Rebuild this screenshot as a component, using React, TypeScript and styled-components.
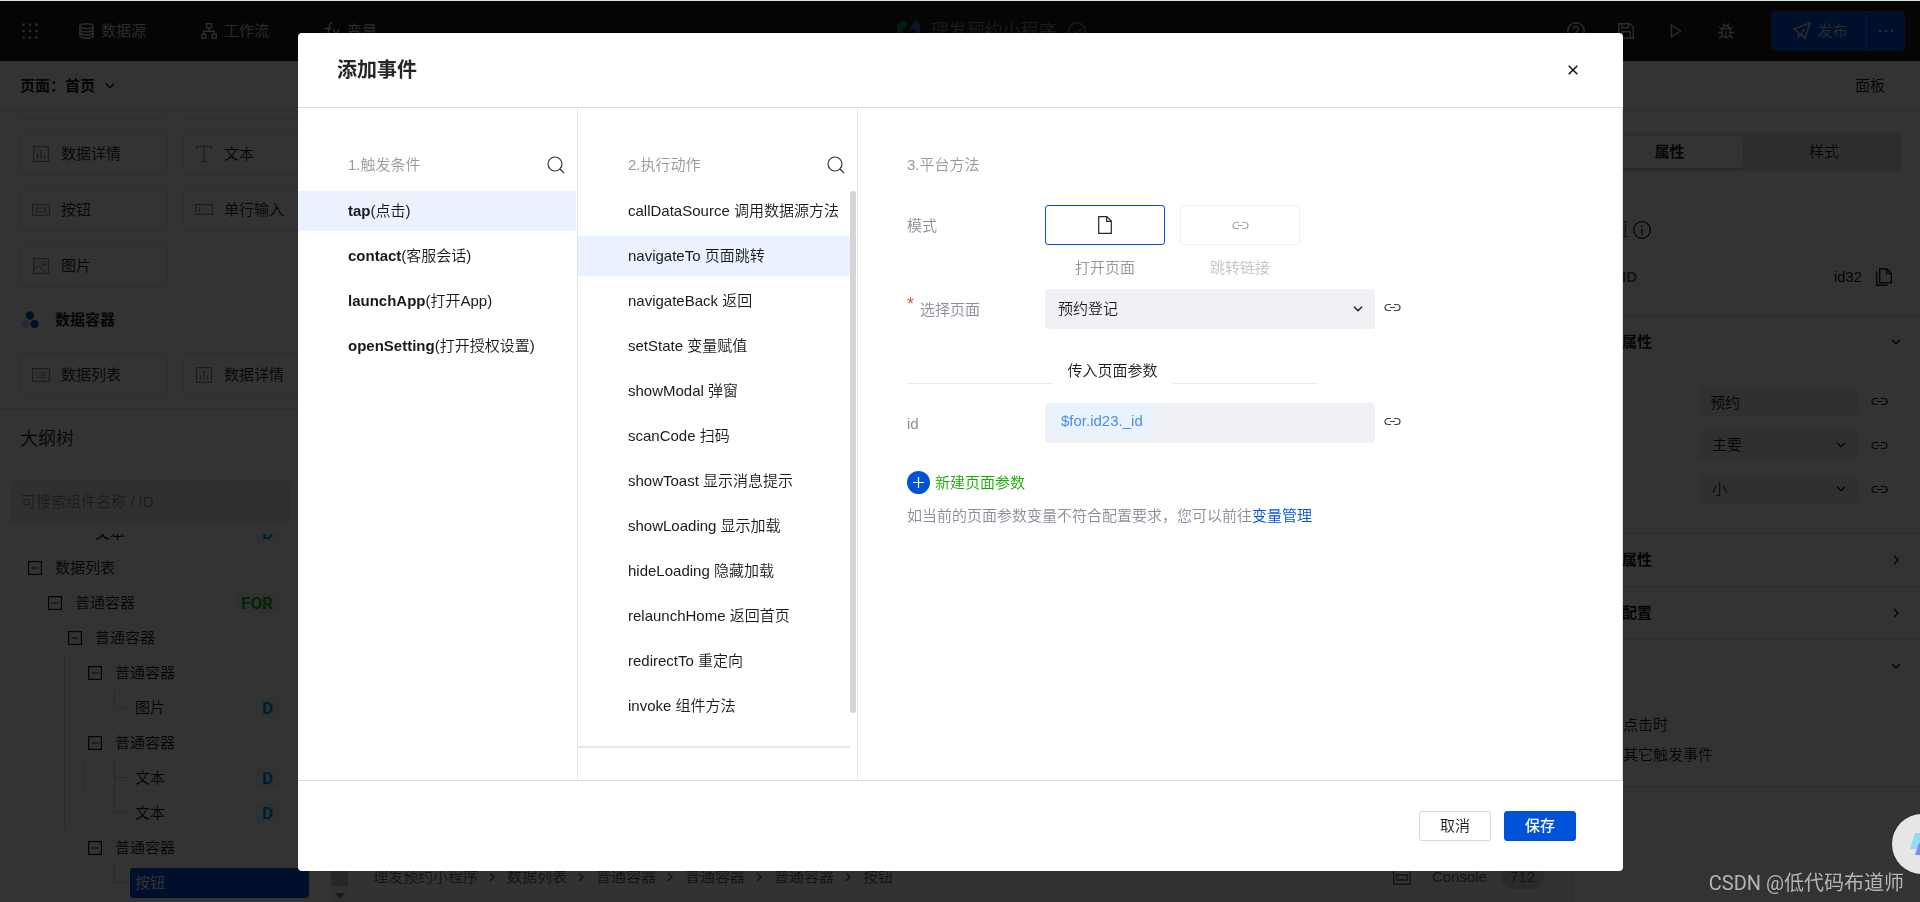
import React from 'react';
import styled, { createGlobalStyle, css } from 'styled-components';

const GlobalStyle = createGlobalStyle`
  *, *::before, *::after { box-sizing: border-box; }
  html, body { margin: 0; height: 100%; overflow: hidden; }
  body {
    font-family: "Liberation Sans", "Noto Sans CJK SC", sans-serif;
    font-size: 15px;
    font-weight: 350;
    line-height: 20px;
    color: #1a1a1a;
    background: #fff;
  }
  button, input, select { font: inherit; color: inherit; }
  button { border: 0; background: none; padding: 0; cursor: pointer; }
  ul { list-style: none; margin: 0; padding: 0; }
  h1, h2, h3, p { margin: 0; font-size: inherit; font-weight: inherit; }
  b { font-weight: 700; }
  svg { display: block; flex: none; }
`;

/* ---------- icons ---------- */

const Icon = styled.svg.attrs((p) => ({ fill: 'none', stroke: p.stroke ?? 'currentColor', 'aria-hidden': true }))`
  overflow: visible;
`;

const LinkIcon = () => (
  <Icon width="17" height="9" viewBox="0 0 17 9" strokeWidth="1.2">
    <path d="M7 1.5H4a3 3 0 0 0 0 6h3M10 1.5h3a3 3 0 0 1 0 6h-3M6 4.5h5" />
  </Icon>
);
const ChevronDown = () => (
  <Icon width="10" height="6" viewBox="0 0 10 6" strokeWidth="1.5">
    <path d="M1 .8l4 4 4-4" />
  </Icon>
);
const ChevronRight = () => (
  <Icon width="6" height="10" viewBox="0 0 6 10" strokeWidth="1.5">
    <path d="M1 1l4 4-4 4" />
  </Icon>
);
const SearchIcon = () => (
  <Icon width="18" height="18" viewBox="0 0 18 18" strokeWidth="1.2">
    <circle cx="8" cy="8" r="7" />
    <path d="M13 13l4 4" />
  </Icon>
);
const FileIcon = () => (
  <Icon width="14" height="18" viewBox="0 0 14 18" strokeWidth="1.2">
    <path d="M.7.7h8.2l4.4 4.4v12.2H.7zM8.7.7v4.6h4.6" />
  </Icon>
);
const CloseIcon = () => (
  <Icon width="10" height="10" viewBox="0 0 10 10" strokeWidth="1.6">
    <path d="M.7.7l8.6 8.6M9.3.7L.7 9.3" />
  </Icon>
);
const AppsIcon = () => (
  <Icon width="16" height="16" viewBox="0 0 16 16" stroke="none">
    {[1.5, 8, 14.5].map((y) => [1.5, 8, 14.5].map((x) => <circle key={`${x}-${y}`} cx={x} cy={y} r="1.3" fill="currentColor" />))}
  </Icon>
);
const DatabaseIcon = () => (
  <Icon width="15" height="16" viewBox="0 0 15 16" strokeWidth="1.5">
    <ellipse cx="7.5" cy="3.2" rx="6.6" ry="2.4" />
    <path d="M.9 3.2v9.6c0 1.3 3 2.4 6.6 2.4s6.6-1.1 6.6-2.4V3.2M.9 6.4c0 1.3 3 2.4 6.6 2.4s6.6-1.1 6.6-2.4M.9 9.6c0 1.3 3 2.4 6.6 2.4s6.6-1.1 6.6-2.4" />
  </Icon>
);
const FlowIcon = () => (
  <Icon width="16" height="16" viewBox="0 0 16 16" strokeWidth="1.4">
    <path d="M5.5.7h5v4h-5zM.7 11.3h4v4h-4zM11.3 11.3h4v4h-4zM8 4.7v3.5M2.7 11.3V8.2h10.6v3.1" />
  </Icon>
);
const FunctionIcon = () => (
  <Icon width="16" height="18" viewBox="0 0 16 18" strokeWidth="1.4">
    <path d="M8.5 1.2C6.4.6 5.6 1.6 5.3 3.5L3.6 14c-.3 2-1.3 3-3 2.5M1 6.5h6.5M9 8c2 0 2.5 7 5.5 7M15.5 8c-2 0-4 7-6.5 7" />
  </Icon>
);
const HelpIcon = () => (
  <Icon width="18" height="18" viewBox="0 0 18 18" strokeWidth="1.4">
    <circle cx="9" cy="9" r="8.2" />
    <path d="M6.5 7a2.5 2.5 0 1 1 3.7 2.2c-.8.5-1.2.9-1.2 1.8M9 12.5v1.3" />
  </Icon>
);
const SaveIcon = () => (
  <Icon width="16" height="16" viewBox="0 0 16 16" strokeWidth="1.4">
    <path d="M.7.7h11l3.6 3.6v11H.7zM4 .7v4h6.5v-4M3.8 15.3V8.8h8.4v6.5" />
  </Icon>
);
const PlayIcon = () => (
  <Icon width="12" height="14" viewBox="0 0 12 14" strokeWidth="1.4">
    <path d="M1.5 1l9 6-9 6z" />
  </Icon>
);
const BugIcon = () => (
  <Icon width="16" height="16" viewBox="0 0 16 16" strokeWidth="1.3">
    <path d="M4 5.5h8v5a4 4 0 0 1-8 0zM5 5.5a3 3 0 0 1 6 0M8 8v6.5M0 9.5h4M12 9.5h4M1 4l3 2.2M15 4l-3 2.2M1 15.5l3.300-3M15 15.5l-3.300-3M5 .5l1.5 2M11 .5L9.5 2.5" />
  </Icon>
);
const SendIcon = () => (
  <Icon width="18" height="18" viewBox="0 0 18 18" strokeWidth="1.5">
    <path d="M17 1L1 7l4.5 3.5v4.3l2.7-2.3L12 16.5zM8 12l3.5-5" />
  </Icon>
);
const MoreIcon = () => (
  <Icon width="16" height="4" viewBox="0 0 16 4" stroke="none">
    <g fill="currentColor"><circle cx="2" cy="2" r="1.3" /><circle cx="8" cy="2" r="1.3" /><circle cx="14" cy="2" r="1.3" /></g>
  </Icon>
);
const LogoIcon = () => (
  <Icon width="23" height="22" viewBox="0 0 23 22" stroke="none">
    <path fill="#07915a" d="M0 5l6-5 5 3-8 11H0z" />
    <path fill="#3f6fd8" d="M23 5l-5-5-6 11 4-2 7 5z" />
    <path fill="#07915a" d="M3 17l6-3 6 5-6 3z" />
  </Icon>
);
const CheckCircleIcon = () => (
  <Icon width="18" height="18" viewBox="0 0 18 18" strokeWidth="1.4">
    <circle cx="9" cy="9" r="8.2" />
    <path d="M5.5 9l2.7 2.7 4.5-5" />
  </Icon>
);
const InfoIcon = () => (
  <Icon width="18" height="18" viewBox="0 0 18 18" strokeWidth="1.3">
    <circle cx="9" cy="9" r="8.3" />
    <path d="M9 7.5V14M9 4.5V6" />
  </Icon>
);
const CopyIcon = () => (
  <Icon width="16" height="18" viewBox="0 0 16 18" strokeWidth="1.4">
    <path d="M3.7.7h7l4.6 4.6v9.5H3.7zM10.5.7v4.8h4.8M.7 3.5v13.8h11" />
  </Icon>
);
const ChartIcon = () => (
  <Icon width="16" height="16" viewBox="0 0 16 16" strokeWidth="1.2">
    <path d="M.6.6h14.8v14.8H.6zM4.5 8v5M8 4v9M11.5 9v4" />
  </Icon>
);
const TextIcon = () => (
  <Icon width="16" height="16" viewBox="0 0 16 16" strokeWidth="1.2">
    <path d="M.6 3.5V.6h14.8v2.9M8 .6v14.8M5 15.4h6" />
  </Icon>
);
const ButtonIcon = () => (
  <Icon width="18" height="12" viewBox="0 0 18 12" strokeWidth="1.2">
    <path d="M.6.6h16.8v10.8H.6zM4.5 4h9v4h-9z" />
  </Icon>
);
const InputIcon = () => (
  <Icon width="18" height="11" viewBox="0 0 18 11" strokeWidth="1.2">
    <path d="M.6.6h16.8v9.8H.6zM4.5 3v5" />
  </Icon>
);
const ImageIcon = () => (
  <Icon width="16" height="16" viewBox="0 0 16 16" strokeWidth="1.2">
    <path d="M.6.6h14.8v14.8H.6zM1 12l4.5-4.5L13 15" />
    <circle cx="10.5" cy="5.5" r="2" />
  </Icon>
);
const ListIcon = () => (
  <Icon width="18" height="14" viewBox="0 0 18 14" strokeWidth="1.2">
    <path d="M.6.6h16.8v12.8H.6zM4 4.5h1.5M7 4.5h7M4 7h1.5M7 7h7M4 9.5h1.5M7 9.5h7" />
  </Icon>
);
const ClusterIcon = () => (
  <Icon width="18" height="18" viewBox="0 0 18 18" stroke="none">
    <circle cx="9" cy="4.5" r="4.2" fill="#0052d9" />
    <circle cx="13.5" cy="13" r="4.2" fill="#0052d9" />
    <circle cx="4.5" cy="13" r="4.2" fill="#bfcdf0" />
  </Icon>
);
const MinusBoxIcon = () => (
  <Icon width="14" height="14" viewBox="0 0 14 14" strokeWidth="1.2">
    <path d="M.6.6h12.8v12.8H.6zM3.5 7h7" />
  </Icon>
);
const ConsoleIcon = () => (
  <Icon width="18" height="16" viewBox="0 0 18 16" strokeWidth="1.4">
    <path d="M.7.7h16.6v14.6H.7zM3.5 6h11v5h-11z" />
  </Icon>
);
const PlusCircleIcon = () => (
  <Icon width="23" height="23" viewBox="0 0 23 23" stroke="none">
    <circle cx="11.5" cy="11.5" r="11.5" fill="#0052d9" />
    <path d="M11.5 6v11M6 11.5h11" stroke="#fff" strokeWidth="1.2" />
  </Icon>
);

/* ---------- editor behind the dialog ---------- */

const Page = styled.div`
  display: flex;
  flex-direction: column;
  height: 100vh;
  border-top: 1px solid #dfe3e1;
`;

const TopBar = styled.header`
  display: flex;
  align-items: center;
  justify-content: space-between;
  flex: none;
  height: 60px;
  padding: 0 15px 0 22px;
  background: #1a1a1a;
  color: #dcdcdc;
`;

const TopGroup = styled.div`
  display: flex;
  align-items: center;
  flex: 1;
`;

const TopLink = styled.button`
  display: flex;
  align-items: center;
  gap: 7px;
  margin-left: 41px;
  & + & { margin-left: 55px; }
`;

const ProjectTitle = styled.h1`
  display: flex;
  align-items: center;
  gap: 11px;
  margin-left: 55px;
  font-size: 18px;
  line-height: 24px;
  color: #8a8a8a;
`;

const TopTools = styled(TopGroup)`
  justify-content: flex-end;
`;

const ToolButton = styled.button`
  display: flex;
  justify-content: center;
  width: 50px;
`;

const Publish = styled.div`
  display: flex;
  height: 40px;
  margin-left: 20px;
  border-radius: 4px;
  background: #0052d9;
`;

const PublishButton = styled.button`
  display: flex;
  align-items: center;
  justify-content: center;
  gap: 6px;
  width: 95px;
  padding-left: 4px;
`;

const PublishMore = styled.button`
  display: flex;
  align-items: center;
  justify-content: center;
  width: 39px;
  border-left: 1px solid #2a6fe6;
`;

const PageBar = styled.div`
  display: flex;
  align-items: center;
  justify-content: space-between;
  flex: none;
  height: 51px;
  padding: 0 35px 0 20px;
  border-bottom: 1px solid #e4e4e8;
`;

const PageSwitch = styled.button`
  display: flex;
  align-items: center;
  gap: 10px;
  font-weight: 700;
`;

const Workspace = styled.div`
  display: flex;
  flex: 1;
  min-height: 0;
`;

const Sidebar = styled.aside`
  display: flex;
  flex-direction: column;
  flex: none;
  width: 331px;
  overflow: hidden;
`;

const Palette = styled.section`
  flex: none;
  overflow: hidden;
  padding: 0 0 11px 20px;
  border-bottom: 1px solid #e2e2e6;
`;

const PaletteScroll = styled.div`
  margin-top: -37px;
`;

const PaletteGrid = styled.div`
  display: grid;
  grid-template-columns: 148px 148px;
  gap: 11px 15px;
`;

const PaletteCard = styled.button`
  display: flex;
  align-items: center;
  gap: 11px;
  height: 45px;
  padding: 0 11px;
  border: 1px solid #e6e6ea;
  border-radius: 4px;
`;

const CardIcon = styled.span`
  display: flex;
  justify-content: center;
  width: 18px;
  color: #8b93a5;
`;

const PaletteHeading = styled.h2`
  display: flex;
  align-items: center;
  gap: 16px;
  height: 64px;
  padding-left: 1px;
  font-weight: 700;
`;

const OutlineTitle = styled.h2`
  flex: none;
  height: 71px;
  padding: 18px 20px 0;
  font-size: 18px;
  line-height: 24px;
`;

const OutlineSearch = styled.input`
  flex: none;
  width: 280px;
  height: 44px;
  margin: 0 10px 10px;
  padding: 0 11px 1px;
  border: 0;
  border-radius: 4px;
  background: #f0f1f4;
  &::placeholder { color: #8b8b90; opacity: 1; }
`;

const Tree = styled.div`
  flex: 1;
  min-height: 0;
  overflow: hidden;
`;

const TreeRows = styled.ul`
  margin-top: -19px;
  padding-left: 24px;
  padding-right: 22px;
`;

const TreeRow = styled.li`
  display: flex;
  align-items: center;
  height: 35px;
`;

const Indent = styled.span<{ $line?: boolean }>`
  width: 20px;
  height: 35px;
  border-left: 1px solid ${(p) => (p.$line ? '#d0d0d6' : 'transparent')};
`;

const Toggle = styled.button`
  width: 26px;
  padding-left: 4px;
`;

const Elbow = styled.span<{ $next?: boolean }>`
  width: 14px;
  height: 35px;
  margin: 0 2px 0 10px;
  &::before, &::after {
    content: "";
    display: block;
    height: 18px;
    border-left: 1px solid #d0d0d6;
  }
  &::before { border-bottom: 1px solid #d0d0d6; }
  &::after { height: 17px; ${(p) => !p.$next && css`border-left-color: transparent;`} }
`;

const NodeLabel = styled.button<{ $selected?: boolean }>`
  flex: 1;
  height: 30px;
  padding: 0 5px;
  text-align: left;
  ${(p) => p.$selected && css`
    border-radius: 3px;
    background: #0052d9;
    color: #fff;
  `}
`;

const NodeBadge = styled.span<{ $loop?: boolean }>`
  margin-right: 30px;
  padding: 0 6px 0 ${(p) => (p.$loop ? '5px' : '8px')};
  border-radius: 4px;
  font: 700 17px/20px Roboto, sans-serif;
  color: ${(p) => (p.$loop ? '#2ba630' : '#0091e0')};
  background: ${(p) => (p.$loop ? '#ecf8ec' : '#eef4fb')};
`;

const CanvasColumn = styled.main`
  display: flex;
  flex: 1;
  min-width: 0;
`;

const ScrollRail = styled.div`
  display: flex;
  flex-direction: column;
  align-items: center;
  width: 17px;
  padding-bottom: 3px;
  background: #f4f4f4;
`;

const ScrollThumb = styled.div`
  flex: 1;
  width: 17px;
  margin-bottom: 7px;
  background: #c4c4c4;
`;

const Canvas = styled.div`
  display: flex;
  flex-direction: column;
  flex: 1;
  background: #f8f8fa;
`;

const StatusBar = styled.footer`
  display: flex;
  align-items: center;
  justify-content: space-between;
  height: 50px;
  margin-top: auto;
  padding: 0 28px 0 25px;
  color: #63636a;
`;

const Crumbs = styled.nav`
  display: flex;
  align-items: center;
  gap: 11px;
`;

const CrumbArrow = styled.span`
  width: 7px;
`;

const ConsoleButton = styled.button`
  display: flex;
  align-items: center;
  gap: 14px;
`;

const ConsoleLabel = styled.span`
  padding-left: 7px;
`;

const ConsoleCount = styled.span`
  padding: 0 9px;
  border-radius: 12px;
  line-height: 24px;
  background: #cdd3e2;
`;

const Inspector = styled.aside`
  flex: none;
  width: 348px;
  border-left: 1px solid #e4e4e8;
`;

const Tabs = styled.div`
  display: grid;
  grid-template-columns: 147px 1fr;
  gap: 4px;
  height: 40px;
  margin: 20px 19px 0;
  padding: 4px 0 4px 4px;
  border-radius: 6px;
  background: #e3e6ec;
`;

const Tab = styled.button<{ $active?: boolean }>`
  border-radius: 3px;
  ${(p) => p.$active && css`
    background: #fff;
    font-weight: 700;
    box-shadow: 0 1px 2px rgba(0, 0, 0, 0.25);
  `}
`;

const ComponentName = styled.h2`
  display: flex;
  align-items: center;
  gap: 5px;
  height: 28px;
  margin: 44px 19px 18px;
  font-size: 18px;
  color: #5c6270;
`;

const InfoButton = styled.button`
  color: #1a1a1a;
`;

const IdRow = styled.div`
  display: flex;
  align-items: center;
  justify-content: space-between;
  height: 30px;
  margin: 0 28px 23px 19px;
`;

const IdLabel = styled.span`
  font-weight: 700;
  color: #5c6270;
`;

const IdValue = styled.span`
  display: flex;
  align-items: center;
  gap: 14px;
`;

const Section = styled.section<{ $last?: boolean }>`
  border-top: 1px solid #e0e0e4;
  ${(p) => p.$last && css`border-bottom: 1px solid #e0e0e4;`}
`;

const SectionHeader = styled.button`
  display: flex;
  align-items: center;
  justify-content: space-between;
  width: 100%;
  height: 52px;
  padding: 0 19px;
  font-weight: 700;
`;

const ChevronSlot = styled.span`
  display: flex;
  justify-content: center;
  width: 10px;
`;

const PropList = styled.div`
  display: flex;
  flex-direction: column;
  gap: 14px;
  padding: 18px 32px 29px 19px;
`;

const PropRow = styled.label`
  display: flex;
  align-items: center;
  justify-content: space-between;
  gap: 13px;
`;

const PropName = styled.span`
  flex: 1;
`;

const fieldLook = css`
  width: 100%;
  border: 0;
  border-radius: 4px;
  background: #f0f1f5;
  appearance: none;
`;

const PropField = styled.span`
  position: relative;
  width: 159px;
`;

const PropInput = styled.input`
  ${fieldLook}
  height: 30px;
  padding: 0 11px;
`;

const PropSelect = styled.select`
  ${fieldLook}
  height: 30px;
  padding: 0 13px;
`;

const SelectArrow = styled.span`
  position: absolute;
  top: calc(50% - 3px);
  right: 12px;
  pointer-events: none;
`;

const EventList = styled.ul`
  padding: 18px 19px 16px 50px;
  line-height: 30px;
`;

/* ---------- dialog ---------- */

const Overlay = styled.div`
  position: fixed;
  inset: 1px 0 0;
  display: flex;
  padding: 32px 297px 31px 298px;
  background: rgba(0, 0, 0, 0.8);
`;

const Dialog = styled.div`
  display: flex;
  flex-direction: column;
  flex: 1;
  min-width: 0;
  border-radius: 4px;
  background: #fff;
  overflow: hidden;
`;

const DialogHeader = styled.header`
  display: flex;
  align-items: center;
  justify-content: space-between;
  flex: none;
  height: 75px;
  padding: 0 45px 0 39px;
  border-bottom: 1px solid #d8d9e3;
`;

const DialogTitle = styled.h2`
  font-size: 20px;
  line-height: 28px;
  font-weight: 700;
  color: #262626;
`;

const DialogBody = styled.div`
  display: flex;
  flex: 1;
  min-height: 0;
  border-right: 1px solid #d8dbe6;
`;

const Column = styled.section`
  display: flex;
  flex-direction: column;
  flex: none;
  width: 280px;
  padding-top: 41px;
  border-right: 1px solid #e3e5ea;
`;

const ColumnHeader = styled.div`
  display: flex;
  align-items: center;
  justify-content: space-between;
  height: 32px;
  margin-bottom: 10px;
  padding: 0 12px 0 50px;
`;

const SearchButton = styled.button`
  color: #333;
`;

const ColumnTitle = styled.h3`
  color: #999;
`;

const Options = styled.ul`
  display: flex;
  flex-direction: column;
  gap: 5px;
`;

const Option = styled.button<{ $selected?: boolean }>`
  display: block;
  width: 100%;
  height: 40px;
  padding-left: 50px;
  text-align: left;
  white-space: nowrap;
  background: ${(p) => (p.$selected ? '#ebf2ff' : 'transparent')};
`;

const TriggerOptions = styled(Options)`
  margin-right: 1px;
`;

const ActionArea = styled.div`
  display: flex;
  flex: 1;
  min-height: 0;
`;

const ActionOptions = styled(Options)`
  flex: 1;
  align-self: flex-start;
  padding-bottom: 20px;
  border-bottom: 2px solid #e5e7ed;
`;

const ActionRail = styled.div`
  width: 6px;
  height: 522px;
  margin-right: 1px;
  border-radius: 3px;
  background: #d4d4d4;
`;

const Method = styled.section`
  flex: 1;
  padding: 41px 49px 0;
`;

const MethodTitle = styled.h3`
  height: 32px;
  margin-bottom: 24px;
  line-height: 32px;
  color: #999;
`;

const FormRow = styled.div`
  display: flex;
`;

const FormLabel = styled.label`
  display: flex;
  align-items: center;
  width: 138px;
  height: 42px;
  color: #888f9b;
`;

const Required = styled.span`
  align-self: flex-start;
  width: 13px;
  padding-top: 5px;
  font-size: 18px;
  color: #f5474c;
`;

const Modes = styled.div`
  display: flex;
  gap: 15px;
  height: 84px;
`;

const ModeOption = styled.div<{ $off?: boolean }>`
  display: flex;
  flex-direction: column;
  align-items: center;
  gap: 13px;
  color: ${(p) => (p.$off ? '#c4c4c6' : '#97979a')};
`;

const ModeButton = styled.button<{ $active?: boolean }>`
  display: flex;
  align-items: center;
  justify-content: center;
  width: 120px;
  height: 40px;
  border: 1px solid ${(p) => (p.$active ? '#0052d9' : '#efeff1')};
  border-radius: 3px;
  color: ${(p) => (p.$active ? '#262626' : '#a8a8ab')};
`;

const FieldBox = styled.div`
  position: relative;
  width: 330px;
  height: 40px;
  padding: 0 6px;
  border-radius: 4px;
  background: #f0f1f5;
`;

const PageSelectBox = styled(FieldBox)`
  padding: 0;
`;

const PageSelect = styled.select`
  ${fieldLook}
  height: 40px;
  padding: 0 13px;
`;

const BindingInput = styled.input`
  width: 103px;
  height: 34px;
  padding: 0 10px;
  border: 0;
  background: #ebf2ff;
  color: #4a8df0;
`;

const BindButton = styled.button`
  height: 36px;
  margin-left: 9px;
  color: #444;
`;

const ParamDivider = styled.div`
  display: flex;
  align-items: flex-end;
  gap: 15px;
  width: 411px;
  margin: 30px 0 19px;
  line-height: 20px;
`;

const DividerLine = styled.span`
  flex: 1;
  height: 1px;
  background: #e9eaed;
`;

const DividerText = styled.span`
  padding-bottom: 3px;
`;

const AddParam = styled.button`
  display: flex;
  align-items: center;
  gap: 5px;
  margin-top: 26px;
  color: #14ad00;
`;

const Hint = styled.p`
  margin-top: 12px;
  color: #888f9b;
`;

const HintLink = styled.a`
  color: #0052d9;
  text-decoration: none;
`;

const DialogFooter = styled.footer`
  display: flex;
  align-items: center;
  justify-content: flex-end;
  gap: 13px;
  flex: none;
  height: 91px;
  padding-right: 47px;
  border-top: 1px solid #d3d9e6;
`;

const FooterButton = styled.button<{ $primary?: boolean }>`
  width: 72px;
  height: 30px;
  border: 1px solid ${(p) => (p.$primary ? '#0052d9' : '#d3d7e2')};
  border-radius: 3px;
  ${(p) => p.$primary && css`
    background: #0052d9;
    color: #fff;
    font-weight: 500;
  `}
`;

const Assistant = styled.button`
  position: fixed;
  right: -32px;
  bottom: 28px;
  width: 60px;
  height: 60px;
  padding-left: 18px;
  border-radius: 50%;
  background: #e6e6e6;
`;

const Watermark = styled.div`
  position: fixed;
  right: 16px;
  bottom: 5px;
  font: 20px/28px Roboto, "Noto Sans CJK SC", sans-serif;
  color: #b4b4b4;
`;

/* ---------- data ---------- */

const paletteBasics: [string, React.ReactNode][] = [
  ['数据详情', <ChartIcon />], ['文本', <TextIcon />],
  ['按钮', <ButtonIcon />], ['单行输入', <InputIcon />],
  ['图片', <ImageIcon />],
];

type Node = { label: string; lines: boolean[]; leaf?: boolean; next?: boolean; badge?: string; selected?: boolean };
const o = false;
const tree: Node[] = [
  { label: '文本', lines: [o, o], leaf: true, badge: 'D' },
  { label: '数据列表', lines: [] },
  { label: '普通容器', lines: [o], badge: 'FOR' },
  { label: '普通容器', lines: [o, o] },
  { label: '普通容器', lines: [o, o, true] },
  { label: '图片', lines: [o, o, true, o], leaf: true, badge: 'D' },
  { label: '普通容器', lines: [o, o, true] },
  { label: '文本', lines: [o, o, true, true], leaf: true, next: true, badge: 'D' },
  { label: '文本', lines: [o, o, true, o], leaf: true, badge: 'D' },
  { label: '普通容器', lines: [o, o, o] },
  { label: '按钮', lines: [o, o, o, o], leaf: true, selected: true },
];

const crumbs = ['理发预约小程序', '数据列表', '普通容器', '普通容器', '普通容器', '按钮'];

const triggers = [['tap', '点击'], ['contact', '客服会话'], ['launchApp', '打开App'], ['openSetting', '打开授权设置']];

const actions = [
  'callDataSource 调用数据源方法', 'navigateTo 页面跳转', 'navigateBack 返回', 'setState 变量赋值',
  'showModal 弹窗', 'scanCode 扫码', 'showToast 显示消息提示', 'showLoading 显示加载',
  'hideLoading 隐藏加载', 'relaunchHome 返回首页', 'redirectTo 重定向', 'invoke 组件方法',
];

/* ---------- views ---------- */

const Card = ({ icon, label }: { icon: React.ReactNode; label: string }) => (
  <PaletteCard><CardIcon>{icon}</CardIcon>{label}</PaletteCard>
);

const Editor = () => (
  <Page>
    <TopBar>
      <TopGroup>
        <AppsIcon />
        <TopLink><DatabaseIcon />数据源</TopLink>
        <TopLink><FlowIcon />工作流</TopLink>
        <TopLink><FunctionIcon />变量</TopLink>
      </TopGroup>
      <ProjectTitle><LogoIcon />理发预约小程序<CheckCircleIcon /></ProjectTitle>
      <TopTools>
        <ToolButton aria-label="帮助"><HelpIcon /></ToolButton>
        <ToolButton aria-label="保存草稿"><SaveIcon /></ToolButton>
        <ToolButton aria-label="预览"><PlayIcon /></ToolButton>
        <ToolButton aria-label="调试"><BugIcon /></ToolButton>
        <Publish>
          <PublishButton><SendIcon />发布</PublishButton>
          <PublishMore aria-label="更多"><MoreIcon /></PublishMore>
        </Publish>
      </TopTools>
    </TopBar>
    <PageBar>
      <PageSwitch>页面：首页<ChevronDown /></PageSwitch>
      <button>面板</button>
    </PageBar>
    <Workspace>
      <Sidebar>
        <Palette>
          <PaletteScroll>
            <PaletteGrid>
              <PaletteCard aria-label="组件" /><PaletteCard aria-label="组件" />
              {paletteBasics.map(([label, icon]) => <Card key={label} label={label} icon={icon} />)}
            </PaletteGrid>
            <PaletteHeading><ClusterIcon />数据容器</PaletteHeading>
            <PaletteGrid>
              <Card label="数据列表" icon={<ListIcon />} />
              <Card label="数据详情" icon={<ChartIcon />} />
            </PaletteGrid>
          </PaletteScroll>
        </Palette>
        <OutlineTitle>大纲树</OutlineTitle>
        <OutlineSearch aria-label="搜索组件" placeholder="可搜索组件名称 / ID" />
        <Tree>
          <TreeRows>
            {tree.map((n, i) => (
              <TreeRow key={i}>
                {n.lines.map((line, k) => <Indent key={k} $line={line} />)}
                {n.leaf ? <Elbow $next={n.next} /> : <Toggle aria-label="收起"><MinusBoxIcon /></Toggle>}
                <NodeLabel $selected={n.selected}>{n.label}</NodeLabel>
                {n.badge && <NodeBadge $loop={n.badge === 'FOR'}>{n.badge}</NodeBadge>}
              </TreeRow>
            ))}
          </TreeRows>
        </Tree>
      </Sidebar>
      <CanvasColumn>
        <ScrollRail>
          <ScrollThumb />
          <Icon width="10" height="6" viewBox="0 0 10 6" stroke="none"><path d="M0 0h10L5 6z" fill="#777" /></Icon>
        </ScrollRail>
        <Canvas>
          <StatusBar>
            <Crumbs>
              {crumbs.map((c, i) => (
                <React.Fragment key={i}>
                  {i > 0 && <CrumbArrow><ChevronRight /></CrumbArrow>}
                  <button>{c}</button>
                </React.Fragment>
              ))}
            </Crumbs>
            <ConsoleButton>
              <ConsoleIcon />
              <ConsoleLabel>Console</ConsoleLabel>
              <ConsoleCount>712</ConsoleCount>
            </ConsoleButton>
          </StatusBar>
        </Canvas>
      </CanvasColumn>
      <Inspector>
        <Tabs><Tab $active>属性</Tab><Tab>样式</Tab></Tabs>
        <ComponentName>按钮<InfoButton aria-label="说明"><InfoIcon /></InfoButton></ComponentName>
        <IdRow><IdLabel>组件ID</IdLabel><IdValue>id32<CopyIcon /></IdValue></IdRow>
        <Section>
          <SectionHeader>基础属性<ChevronSlot><ChevronDown /></ChevronSlot></SectionHeader>
          <PropList>
            <PropRow>
              <PropName>内容</PropName>
              <PropField><PropInput defaultValue="预约" /></PropField>
              <LinkIcon />
            </PropRow>
            <PropRow>
              <PropName>类型</PropName>
              <PropField>
                <PropSelect><option>主要</option></PropSelect>
                <SelectArrow><ChevronDown /></SelectArrow>
              </PropField>
              <LinkIcon />
            </PropRow>
            <PropRow>
              <PropName>尺寸</PropName>
              <PropField>
                <PropSelect><option>小</option></PropSelect>
                <SelectArrow><ChevronDown /></SelectArrow>
              </PropField>
              <LinkIcon />
            </PropRow>
          </PropList>
        </Section>
        <Section><SectionHeader>高级属性<ChevronSlot><ChevronRight /></ChevronSlot></SectionHeader></Section>
        <Section><SectionHeader>通用配置<ChevronSlot><ChevronRight /></ChevronSlot></SectionHeader></Section>
        <Section $last>
          <SectionHeader>事件<ChevronSlot><ChevronDown /></ChevronSlot></SectionHeader>
          <EventList><li>点击时</li><li>其它触发事件</li></EventList>
        </Section>
      </Inspector>
    </Workspace>
  </Page>
);

const EventDialog = () => (
  <Overlay>
    <Dialog role="dialog" aria-modal="true" aria-labelledby="dialog-title">
      <DialogHeader>
        <DialogTitle id="dialog-title">添加事件</DialogTitle>
        <button aria-label="关闭"><CloseIcon /></button>
      </DialogHeader>
      <DialogBody>
        <Column>
          <ColumnHeader>
            <ColumnTitle>1.触发条件</ColumnTitle>
            <SearchButton aria-label="搜索触发条件"><SearchIcon /></SearchButton>
          </ColumnHeader>
          <TriggerOptions>
            {triggers.map(([name, text], i) => (
              <li key={name}><Option $selected={i === 0}><b>{name}</b>({text})</Option></li>
            ))}
          </TriggerOptions>
        </Column>
        <Column>
          <ColumnHeader>
            <ColumnTitle>2.执行动作</ColumnTitle>
            <SearchButton aria-label="搜索执行动作"><SearchIcon /></SearchButton>
          </ColumnHeader>
          <ActionArea>
            <ActionOptions>
              {actions.map((a, i) => <li key={a}><Option $selected={i === 1}>{a}</Option></li>)}
            </ActionOptions>
            <ActionRail />
          </ActionArea>
        </Column>
        <Method>
          <MethodTitle>3.平台方法</MethodTitle>
          <FormRow>
            <FormLabel as="span">模式</FormLabel>
            <Modes>
              <ModeOption>
                <ModeButton $active aria-pressed="true" aria-labelledby="mode-page"><FileIcon /></ModeButton>
                <span id="mode-page">打开页面</span>
              </ModeOption>
              <ModeOption $off>
                <ModeButton aria-pressed="false" aria-labelledby="mode-link"><LinkIcon /></ModeButton>
                <span id="mode-link">跳转链接</span>
              </ModeOption>
            </Modes>
          </FormRow>
          <FormRow>
            <FormLabel htmlFor="target-page"><Required>*</Required>选择页面</FormLabel>
            <PageSelectBox>
              <PageSelect id="target-page"><option>预约登记</option></PageSelect>
              <SelectArrow><ChevronDown /></SelectArrow>
            </PageSelectBox>
            <BindButton aria-label="绑定页面"><LinkIcon /></BindButton>
          </FormRow>
          <ParamDivider><DividerLine /><DividerText>传入页面参数</DividerText><DividerLine /></ParamDivider>
          <FormRow>
            <FormLabel htmlFor="param-id">id</FormLabel>
            <FieldBox><BindingInput id="param-id" defaultValue="$for.id23._id" /></FieldBox>
            <BindButton aria-label="绑定参数"><LinkIcon /></BindButton>
          </FormRow>
          <AddParam><PlusCircleIcon />新建页面参数</AddParam>
          <Hint>如当前的页面参数变量不符合配置要求，您可以前往<HintLink href="#variables">变量管理</HintLink></Hint>
        </Method>
      </DialogBody>
      <DialogFooter>
        <FooterButton>取消</FooterButton>
        <FooterButton $primary>保存</FooterButton>
      </DialogFooter>
    </Dialog>
  </Overlay>
);

export default function App() {
  return (
    <>
      <GlobalStyle />
      <Editor />
      <EventDialog />
      <Assistant aria-label="助手">
        <Icon width="30" height="34" viewBox="0 0 30 34" stroke="none">
          <path d="M5 6h22l-4 16H0z" fill="#8fdcf5" />
          <path d="M9 16h20l-4 12H5z" fill="#7a8cf8" />
        </Icon>
      </Assistant>
      <Watermark>CSDN @低代码布道师</Watermark>
    </>
  );
}
